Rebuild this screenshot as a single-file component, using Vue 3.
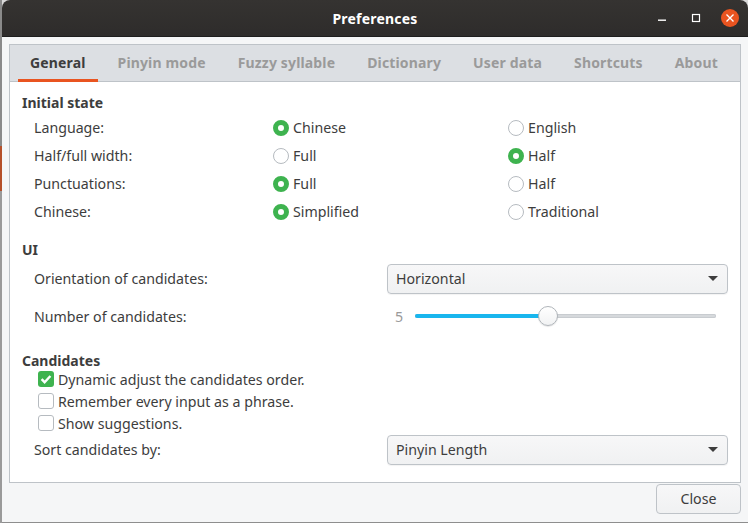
<template>
  <div class="desk">
    <div class="sliver"></div>
    <div class="win">
      <header class="titlebar">
        <span class="title">Preferences</span>
        <div class="controls">
          <svg class="ctl min" width="10" height="10" viewBox="0 0 10 10"><rect x="1" y="6.5" width="8" height="1.4" fill="#fff" /></svg>
          <svg class="ctl max" width="10" height="10" viewBox="0 0 10 10"><rect x="1.5" y="1.5" width="7" height="7" fill="none" stroke="#fff" stroke-width="1.2" /></svg>
          <span class="close-dot">
            <svg width="10" height="10" viewBox="0 0 10 10"><path d="M1.5 1.5l7 7M8.5 1.5l-7 7" stroke="#fff" stroke-width="1.4" /></svg>
          </span>
        </div>
      </header>

      <div class="body">
        <div class="notebook">
          <nav class="tabs">
            <span v-for="(t, i) in tabs" :key="t" class="tab" :class="{ active: i === 0 }">{{ t }}</span>
          </nav>

          <div class="page">
            <h3>Initial state</h3>
            <div v-for="r in radios" :key="r.label" class="radio-row">
              <span class="label">{{ r.label }}</span>
              <span class="radio-cell">
                <i class="radio" :class="{ on: r.sel === 0 }"></i><span class="txt">{{ r.a }}</span>
              </span>
              <span class="radio-cell">
                <i class="radio" :class="{ on: r.sel === 1 }"></i><span class="txt">{{ r.b }}</span>
              </span>
            </div>

            <h3 class="ui-head">UI</h3>
            <div class="field-row">
              <span class="label">Orientation of candidates:</span>
              <div class="combo">Horizontal<i class="arrow"></i></div>
            </div>
            <div class="slider-row">
              <span class="label">Number of candidates:</span>
              <div class="slider">
                <span class="val">5</span>
                <div class="track">
                  <div class="fill" :style="{ width: sliderPos + 'px' }"></div>
                  <div class="thumb" :style="{ left: sliderPos + 'px' }"></div>
                </div>
              </div>
            </div>

            <h3 class="cand-head">Candidates</h3>
            <div v-for="c in checks" :key="c.text" class="check-row">
              <i class="check" :class="{ on: c.on }">
                <svg v-if="c.on" width="16" height="16" viewBox="0 0 16 16"><path d="M3.6 8.2l3 3 5.8-6.2" fill="none" stroke="#fff" stroke-width="2.4" /></svg>
              </i>
              <span>{{ c.text }}</span>
            </div>
            <div class="field-row sort-row">
              <span class="label">Sort candidates by:</span>
              <div class="combo">Pinyin Length<i class="arrow"></i></div>
            </div>
          </div>
        </div>

        <div class="actions">
          <button class="close-btn">Close</button>
        </div>
      </div>
    </div>
  </div>
</template>

<script setup>
const tabs = ['General', 'Pinyin mode', 'Fuzzy syllable', 'Dictionary', 'User data', 'Shortcuts', 'About']

const radios = [
  { label: 'Language:', a: 'Chinese', b: 'English', sel: 0 },
  { label: 'Half/full width:', a: 'Full', b: 'Half', sel: 1 },
  { label: 'Punctuations:', a: 'Full', b: 'Half', sel: 0 },
  { label: 'Chinese:', a: 'Simplified', b: 'Traditional', sel: 0 }
]

const checks = [
  { text: 'Dynamic adjust the candidates order.', on: true },
  { text: 'Remember every input as a phrase.', on: false },
  { text: 'Show suggestions.', on: false }
]

const sliderPos = 132
</script>

<style>
html, body {
  margin: 0;
  overflow: hidden;
}
</style>

<style scoped>
.desk {
  width: 748px;
  height: 523px;
  display: flex;
  background: #d9d9d9;
  font-family: "Noto Sans", sans-serif;
  font-size: 14.2px;
  color: #3d3d3d;
  overflow: hidden;
}

.sliver {
  width: 2px;
  flex: none;
  background: linear-gradient(#8a8a8a 0, #8a8a8a 146px, #b5502a 146px, #b5502a 191px, #9a9a9a 191px);
}

.win {
  flex: 1;
  height: 522px;
  display: flex;
  flex-direction: column;
  background: #f5f6f7;
  border-radius: 8px 8px 0 0;
  overflow: hidden;
  border-bottom: 1px solid #8e8e8e;
}

.titlebar {
  height: 37px;
  flex: none;
  display: flex;
  align-items: center;
  justify-content: center;
  position: relative;
  background: linear-gradient(#353331, #2e2c2b);
  border-bottom: 1px solid #1e1e1e;
  box-sizing: border-box;
}

.title {
  color: #fff;
  font-weight: 700;
  font-size: 14px;
  letter-spacing: 0.2px;
}

.controls {
  position: absolute;
  right: 9px;
  top: 0;
  height: 36px;
  display: flex;
  align-items: center;
}

.min {
  margin-right: 24px;
}

.max {
  margin-right: 20px;
}

.close-dot {
  width: 18px;
  height: 18px;
  border-radius: 50%;
  background: #e95420;
  display: flex;
  align-items: center;
  justify-content: center;
}

.body {
  flex: 1;
  display: flex;
  flex-direction: column;
  padding: 7px 7px 0;
}

.notebook {
  height: 439px;
  box-sizing: border-box;
  border: 1px solid #bec3c8;
  background: #fff;
  flex: none;
}

.tabs {
  height: 37px;
  box-sizing: border-box;
  display: flex;
  padding-left: 8px;
  background: #dcdfe3;
  border-bottom: 1px solid #bec3c8;
}

.tab {
  padding: 0 12px;
  height: 36px;
  line-height: 35px;
  box-sizing: border-box;
  font-weight: 700;
  font-size: 14px;
  letter-spacing: 0.15px;
  color: #9a9a9a;
  margin-right: 8px;
  border-bottom: 3px solid transparent;
  white-space: nowrap;
  flex: none;
}

.tab.active {
  color: #3d3d3d;
  border-bottom-color: #e95420;
  margin-bottom: -1px;
  height: 37px;
}

.page {
  padding: 11px 12px 0;
}

h3 {
  margin: 0;
  font-size: 14px;
  font-weight: 700;
  line-height: 20px;
  color: #3d3d3d;
}

.radio-row {
  display: flex;
  align-items: center;
  height: 28px;
  padding-left: 12px;
}

.radio-row:first-of-type {
  margin-top: 1px;
}

.label {
  width: 239px;
  flex: none;
  padding-bottom: 2px;
}

.txt {
  padding-bottom: 2px;
}

.radio-cell {
  width: 235px;
  flex: none;
  display: flex;
  align-items: center;
}

.radio {
  width: 16px;
  height: 16px;
  box-sizing: border-box;
  border-radius: 50%;
  border: 1px solid #b6bbc0;
  background: #fff;
  margin-right: 4px;
  flex: none;
}

.radio.on {
  border: 5px solid #3eb34f;
  background: #fff;
}

.ui-head {
  margin-top: 14px;
}

.field-row {
  display: flex;
  align-items: center;
  padding-left: 12px;
  margin-top: 4px;
}

.field-row .label {
  width: 353px;
}

.combo {
  width: 341px;
  height: 30px;
  box-sizing: border-box;
  border: 1px solid #bec3c8;
  border-radius: 4px;
  background: linear-gradient(#f7f7f8, #f0f1f2);
  display: flex;
  align-items: center;
  justify-content: space-between;
  padding: 0 9px 2px 8px;
  box-shadow: 0 1px 1px rgba(0, 0, 0, 0.05);
}

.arrow {
  width: 0;
  height: 0;
  border-left: 5px solid transparent;
  border-right: 5px solid transparent;
  border-top: 5px solid #3d3d3d;
}

.slider-row {
  display: flex;
  align-items: center;
  height: 44px;
  padding-left: 12px;
}

.slider-row .label {
  width: 361px;
  padding-bottom: 0;
}

.slider {
  display: flex;
  align-items: center;
  flex: 1;
}

.val {
  width: 20px;
  color: #9a9a9a;
}

.track {
  position: relative;
  width: 301px;
  height: 4px;
  border-radius: 2px;
  background: #d6d9dc;
  box-shadow: inset 0 0 0 1px #c8ccd0;
}

.fill {
  height: 100%;
  border-radius: 2px;
  background: #19b6ee;
}

.thumb {
  position: absolute;
  top: -8px;
  margin-left: -9px;
  width: 20px;
  height: 20px;
  box-sizing: border-box;
  border-radius: 50%;
  border: 1px solid #b0b5ba;
  background: linear-gradient(#fff, #f1f2f3);
  box-shadow: 0 1px 1px rgba(0, 0, 0, 0.1);
}

.cand-head {
  margin-top: 16px;
  line-height: 14px;
}

.check-row {
  display: flex;
  align-items: center;
  height: 22px;
  padding-left: 16px;
}

.check {
  width: 16px;
  height: 16px;
  box-sizing: border-box;
  border: 1px solid #b6bbc0;
  border-radius: 3px;
  background: #fff;
  margin-right: 4px;
  flex: none;
  display: flex;
  align-items: center;
  justify-content: center;
}

.check.on {
  border: none;
  background: #3eb34f;
}

.sort-row {
  margin-top: 1px;
}

.actions {
  display: flex;
  justify-content: flex-end;
  padding-top: 1px;
}

.close-btn {
  width: 85px;
  height: 30px;
  box-sizing: border-box;
  border: 1px solid #bec3c8;
  border-radius: 4px;
  background: linear-gradient(#f7f7f8, #f0f1f2);
  font-family: inherit;
  font-size: 14.2px;
  color: #3d3d3d;
  padding: 0 0 2px;
}
</style>
